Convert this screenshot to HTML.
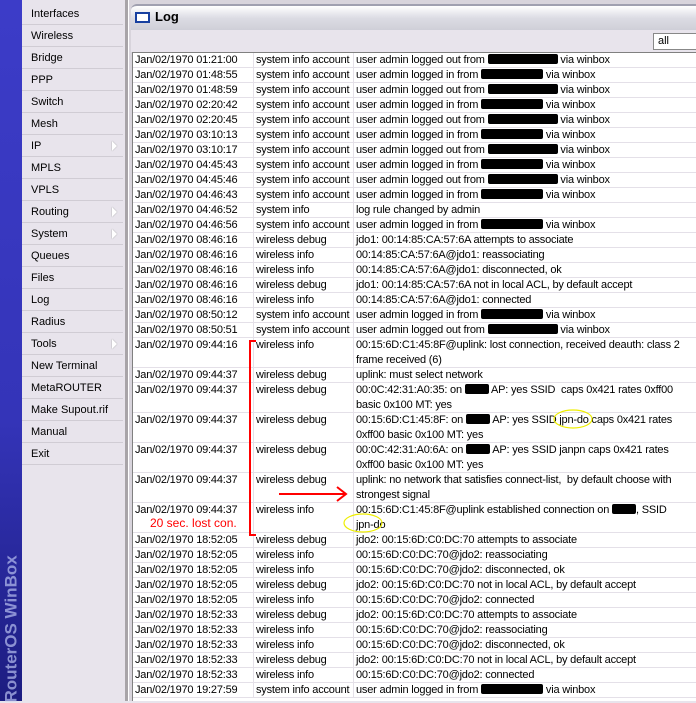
<!DOCTYPE html><html><head><style>
*{margin:0;padding:0;box-sizing:border-box}
body{width:696px;height:701px;overflow:hidden;background:#e8e4ec;font-family:"Liberation Sans",sans-serif;font-size:11px;position:relative}
#side{position:absolute;left:0;top:0;width:22px;height:701px;background:linear-gradient(#3c3cc8,#3434b8 60%,#1c1c80)}
#side span{position:absolute;left:-66px;top:615px;width:155px;transform:rotate(-90deg);color:#b8c0f0;font-size:17px;font-weight:bold;white-space:nowrap;opacity:.7}
#menu{position:absolute;left:22px;top:0;width:103px;height:701px;background:#e8e4ec}
.mi{position:absolute;left:0;width:101px;height:22px;border-bottom:1px solid #d0ccd4;padding-left:9px;line-height:22px;color:#000;font-size:11px}
.mi i{position:absolute;right:6px;top:6px;width:0;height:0;border-left:5px solid #fff;border-top:5px solid transparent;border-bottom:5px solid transparent;filter:drop-shadow(0 0 0.5px #888)}
#div{position:absolute;left:125px;top:0;width:3px;height:701px;background:#a8a4a8}
#win{position:absolute;left:128px;top:0;width:568px;height:701px;background:#d8d4dc;border-left:1px solid #fff}
#title{position:absolute;left:2px;top:4px;width:566px;height:26px;background:linear-gradient(#ffffff,#dcdce4 50%,#cfcfd8);border-radius:6px 0 0 0;border-top:2px solid #a0a0b0}
#title .ic{position:absolute;left:4px;top:6px;width:15px;height:11px;border:2px solid #1840a0;background:#fff}
#title b{position:absolute;left:24px;top:3px;font-size:13px}
#tb{position:absolute;left:2px;top:30px;width:566px;height:22px;background:#e8e4ec}
#tb .all{position:absolute;left:522px;top:3px;width:50px;height:17px;background:#fff;border:1px solid #888;padding-left:4px;line-height:15px;font-size:11px}
#tbl{position:absolute;left:3px;top:52px;width:566px;height:649px;background:#fff;border-left:1px solid #808080;border-top:1px solid #808080;letter-spacing:-0.2px}
.r{position:absolute;left:0;width:566px;border-bottom:1px solid #e4e0e8;line-height:15px}
.r div{position:absolute;top:0;white-space:nowrap}
.c1{left:2px}.c2{left:120px;border-left:1px solid #e4e0e8;padding-left:2px;height:100%}
.c3{left:220px;border-left:1px solid #e4e0e8;padding-left:2px;width:345px;height:100%;white-space:normal!important}
.x{display:inline-block;background:#000;height:10px;vertical-align:-1px;border-radius:2px}
</style></head><body>
<div id="side"><span>RouterOS WinBox</span></div>
<div id="menu">
<div class="mi" style="top:3px">Interfaces</div>
<div class="mi" style="top:25px">Wireless</div>
<div class="mi" style="top:47px">Bridge</div>
<div class="mi" style="top:69px">PPP</div>
<div class="mi" style="top:91px">Switch</div>
<div class="mi" style="top:113px">Mesh</div>
<div class="mi" style="top:135px">IP<i></i></div>
<div class="mi" style="top:157px">MPLS</div>
<div class="mi" style="top:179px">VPLS</div>
<div class="mi" style="top:201px">Routing<i></i></div>
<div class="mi" style="top:223px">System<i></i></div>
<div class="mi" style="top:245px">Queues</div>
<div class="mi" style="top:267px">Files</div>
<div class="mi" style="top:289px">Log</div>
<div class="mi" style="top:311px">Radius</div>
<div class="mi" style="top:333px">Tools<i></i></div>
<div class="mi" style="top:355px">New Terminal</div>
<div class="mi" style="top:377px">MetaROUTER</div>
<div class="mi" style="top:399px">Make Supout.rif</div>
<div class="mi" style="top:421px">Manual</div>
<div class="mi" style="top:443px">Exit</div>
</div>
<div id="div"></div>
<div id="win">
<div id="title"><div class="ic"></div><b>Log</b></div>
<div id="tb"><div class="all">all</div></div>
<div id="tbl">
<div class="r" style="top:0;height:15px"><div class="c1">Jan/02/1970 01:21:00</div><div class="c2">system info account</div><div class="c3">user admin logged out from <span class="x" style="width:70px"></span> via winbox</div></div>
<div class="r" style="top:15px;height:15px"><div class="c1">Jan/02/1970 01:48:55</div><div class="c2">system info account</div><div class="c3">user admin logged in from <span class="x" style="width:62px"></span> via winbox</div></div>
<div class="r" style="top:30px;height:15px"><div class="c1">Jan/02/1970 01:48:59</div><div class="c2">system info account</div><div class="c3">user admin logged out from <span class="x" style="width:70px"></span> via winbox</div></div>
<div class="r" style="top:45px;height:15px"><div class="c1">Jan/02/1970 02:20:42</div><div class="c2">system info account</div><div class="c3">user admin logged in from <span class="x" style="width:62px"></span> via winbox</div></div>
<div class="r" style="top:60px;height:15px"><div class="c1">Jan/02/1970 02:20:45</div><div class="c2">system info account</div><div class="c3">user admin logged out from <span class="x" style="width:70px"></span> via winbox</div></div>
<div class="r" style="top:75px;height:15px"><div class="c1">Jan/02/1970 03:10:13</div><div class="c2">system info account</div><div class="c3">user admin logged in from <span class="x" style="width:62px"></span> via winbox</div></div>
<div class="r" style="top:90px;height:15px"><div class="c1">Jan/02/1970 03:10:17</div><div class="c2">system info account</div><div class="c3">user admin logged out from <span class="x" style="width:70px"></span> via winbox</div></div>
<div class="r" style="top:105px;height:15px"><div class="c1">Jan/02/1970 04:45:43</div><div class="c2">system info account</div><div class="c3">user admin logged in from <span class="x" style="width:62px"></span> via winbox</div></div>
<div class="r" style="top:120px;height:15px"><div class="c1">Jan/02/1970 04:45:46</div><div class="c2">system info account</div><div class="c3">user admin logged out from <span class="x" style="width:70px"></span> via winbox</div></div>
<div class="r" style="top:135px;height:15px"><div class="c1">Jan/02/1970 04:46:43</div><div class="c2">system info account</div><div class="c3">user admin logged in from <span class="x" style="width:62px"></span> via winbox</div></div>
<div class="r" style="top:150px;height:15px"><div class="c1">Jan/02/1970 04:46:52</div><div class="c2">system info</div><div class="c3">log rule changed by admin</div></div>
<div class="r" style="top:165px;height:15px"><div class="c1">Jan/02/1970 04:46:56</div><div class="c2">system info account</div><div class="c3">user admin logged in from <span class="x" style="width:62px"></span> via winbox</div></div>
<div class="r" style="top:180px;height:15px"><div class="c1">Jan/02/1970 08:46:16</div><div class="c2">wireless debug</div><div class="c3">jdo1: 00:14:85:CA:57:6A attempts to associate</div></div>
<div class="r" style="top:195px;height:15px"><div class="c1">Jan/02/1970 08:46:16</div><div class="c2">wireless info</div><div class="c3">00:14:85:CA:57:6A@jdo1: reassociating</div></div>
<div class="r" style="top:210px;height:15px"><div class="c1">Jan/02/1970 08:46:16</div><div class="c2">wireless info</div><div class="c3">00:14:85:CA:57:6A@jdo1: disconnected, ok</div></div>
<div class="r" style="top:225px;height:15px"><div class="c1">Jan/02/1970 08:46:16</div><div class="c2">wireless debug</div><div class="c3">jdo1: 00:14:85:CA:57:6A not in local ACL, by default accept</div></div>
<div class="r" style="top:240px;height:15px"><div class="c1">Jan/02/1970 08:46:16</div><div class="c2">wireless info</div><div class="c3">00:14:85:CA:57:6A@jdo1: connected</div></div>
<div class="r" style="top:255px;height:15px"><div class="c1">Jan/02/1970 08:50:12</div><div class="c2">system info account</div><div class="c3">user admin logged in from <span class="x" style="width:62px"></span> via winbox</div></div>
<div class="r" style="top:270px;height:15px"><div class="c1">Jan/02/1970 08:50:51</div><div class="c2">system info account</div><div class="c3">user admin logged out from <span class="x" style="width:70px"></span> via winbox</div></div>
<div class="r" style="top:285px;height:30px"><div class="c1">Jan/02/1970 09:44:16</div><div class="c2">wireless info</div><div class="c3">00:15:6D:C1:45:8F@uplink: lost connection, received deauth: class 2 frame received (6)</div></div>
<div class="r" style="top:315px;height:15px"><div class="c1">Jan/02/1970 09:44:37</div><div class="c2">wireless debug</div><div class="c3">uplink: must select network</div></div>
<div class="r" style="top:330px;height:30px"><div class="c1">Jan/02/1970 09:44:37</div><div class="c2">wireless debug</div><div class="c3">00:0C:42:31:A0:35: on <span class="x" style="width:24px"></span> AP: yes SSID &nbsp;caps 0x421 rates 0xff00 basic 0x100 MT: yes</div></div>
<div class="r" style="top:360px;height:30px"><div class="c1">Jan/02/1970 09:44:37</div><div class="c2">wireless debug</div><div class="c3">00:15:6D:C1:45:8F: on <span class="x" style="width:24px"></span> AP: yes SSID jpn-do caps 0x421 rates 0xff00 basic 0x100 MT: yes</div></div>
<div class="r" style="top:390px;height:30px"><div class="c1">Jan/02/1970 09:44:37</div><div class="c2">wireless debug</div><div class="c3">00:0C:42:31:A0:6A: on <span class="x" style="width:24px"></span> AP: yes SSID janpn caps 0x421 rates 0xff00 basic 0x100 MT: yes</div></div>
<div class="r" style="top:420px;height:30px"><div class="c1">Jan/02/1970 09:44:37</div><div class="c2">wireless debug</div><div class="c3">uplink: no network that satisfies connect-list, &nbsp;by default choose with strongest signal</div></div>
<div class="r" style="top:450px;height:30px"><div class="c1">Jan/02/1970 09:44:37</div><div class="c2">wireless info</div><div class="c3">00:15:6D:C1:45:8F@uplink established connection on <span class="x" style="width:24px"></span>, SSID<br>jpn-do</div></div>
<div class="r" style="top:480px;height:15px"><div class="c1">Jan/02/1970 18:52:05</div><div class="c2">wireless debug</div><div class="c3">jdo2: 00:15:6D:C0:DC:70 attempts to associate</div></div>
<div class="r" style="top:495px;height:15px"><div class="c1">Jan/02/1970 18:52:05</div><div class="c2">wireless info</div><div class="c3">00:15:6D:C0:DC:70@jdo2: reassociating</div></div>
<div class="r" style="top:510px;height:15px"><div class="c1">Jan/02/1970 18:52:05</div><div class="c2">wireless info</div><div class="c3">00:15:6D:C0:DC:70@jdo2: disconnected, ok</div></div>
<div class="r" style="top:525px;height:15px"><div class="c1">Jan/02/1970 18:52:05</div><div class="c2">wireless debug</div><div class="c3">jdo2: 00:15:6D:C0:DC:70 not in local ACL, by default accept</div></div>
<div class="r" style="top:540px;height:15px"><div class="c1">Jan/02/1970 18:52:05</div><div class="c2">wireless info</div><div class="c3">00:15:6D:C0:DC:70@jdo2: connected</div></div>
<div class="r" style="top:555px;height:15px"><div class="c1">Jan/02/1970 18:52:33</div><div class="c2">wireless debug</div><div class="c3">jdo2: 00:15:6D:C0:DC:70 attempts to associate</div></div>
<div class="r" style="top:570px;height:15px"><div class="c1">Jan/02/1970 18:52:33</div><div class="c2">wireless info</div><div class="c3">00:15:6D:C0:DC:70@jdo2: reassociating</div></div>
<div class="r" style="top:585px;height:15px"><div class="c1">Jan/02/1970 18:52:33</div><div class="c2">wireless info</div><div class="c3">00:15:6D:C0:DC:70@jdo2: disconnected, ok</div></div>
<div class="r" style="top:600px;height:15px"><div class="c1">Jan/02/1970 18:52:33</div><div class="c2">wireless debug</div><div class="c3">jdo2: 00:15:6D:C0:DC:70 not in local ACL, by default accept</div></div>
<div class="r" style="top:615px;height:15px"><div class="c1">Jan/02/1970 18:52:33</div><div class="c2">wireless info</div><div class="c3">00:15:6D:C0:DC:70@jdo2: connected</div></div>
<div class="r" style="top:630px;height:15px"><div class="c1">Jan/02/1970 19:27:59</div><div class="c2">system info account</div><div class="c3">user admin logged in from <span class="x" style="width:62px"></span> via winbox</div></div>
</div>
</div>
<svg style="position:absolute;left:0;top:0" width="696" height="701">
<path d="M256 341 H250 V535 H256" stroke="#f00" stroke-width="2" fill="none"/>
<path d="M279 494 H345 M337 487 L346 494 L337 501" stroke="#f00" stroke-width="2" fill="none"/>
<ellipse cx="573" cy="419" rx="19" ry="9" stroke="#ee0" stroke-width="1.2" fill="none"/>
<ellipse cx="363" cy="523" rx="19" ry="9" stroke="#ee0" stroke-width="1.2" fill="none"/>
<text x="150" y="527" fill="#f00" font-family="Liberation Sans" font-size="12">20 sec. lost con.</text>
</svg>
</body></html>
